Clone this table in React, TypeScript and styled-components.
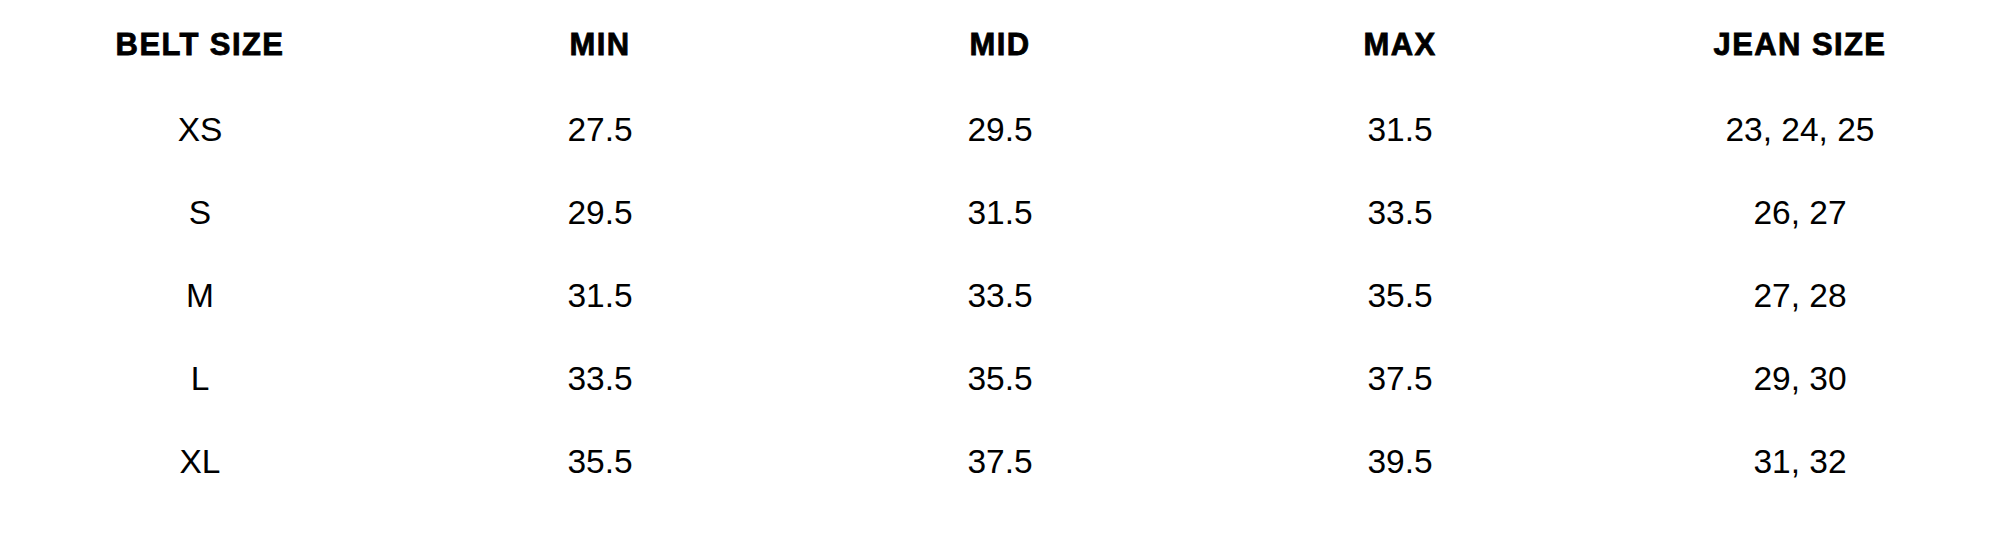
import styled, { createGlobalStyle } from "styled-components"

type SizeRow = {
    belt: string
    min: string
    mid: string
    max: string
    jean: string
}

const rows: SizeRow[] = [
    { belt: "XS", min: "27.5", mid: "29.5", max: "31.5", jean: "23, 24, 25" },
    { belt: "S", min: "29.5", mid: "31.5", max: "33.5", jean: "26, 27" },
    { belt: "M", min: "31.5", mid: "33.5", max: "35.5", jean: "27, 28" },
    { belt: "L", min: "33.5", mid: "35.5", max: "37.5", jean: "29, 30" },
    { belt: "XL", min: "35.5", mid: "37.5", max: "39.5", jean: "31, 32" },
]

const headers = ["BELT SIZE", "MIN", "MID", "MAX", "JEAN SIZE"]

export default function App(){
    return(
        <>
            <GlobalStyle/>
            <Page>
                <SizeTable>
                    <thead>
                        <HeadRow>
                            {headers.map((h)=><HeadCell key={h}>{h}</HeadCell>)}
                        </HeadRow>
                    </thead>
                    <tbody>
                        {rows.map((r)=>(
                            <BodyRow key={r.belt}>
                                <Cell>{r.belt}</Cell>
                                <Cell>{r.min}</Cell>
                                <Cell>{r.mid}</Cell>
                                <Cell>{r.max}</Cell>
                                <Cell>{r.jean}</Cell>
                            </BodyRow>
                        ))}
                    </tbody>
                </SizeTable>
            </Page>
        </>
    )
}

const GlobalStyle = createGlobalStyle`
    html, body{
        margin: 0;
        padding: 0;
        background: #ffffff;
    }
    body{
        font-family: "Liberation Sans", Arial, Helvetica, sans-serif;
        color: #000000;
    }
`;

const Page = styled.div`
    width: 2000px;
    height: 560px;
    background: #ffffff;
`;

const SizeTable = styled.table`
    width: 2000px;
    table-layout: fixed;
    border-collapse: collapse;
    border-spacing: 0;
`;

const HeadRow = styled.tr`
    height: 88px;
`;

const BodyRow = styled.tr`
    height: 83px;
`;

const HeadCell = styled.th`
    padding: 0;
    text-align: center;
    vertical-align: middle;
    font-size: 31px;
    font-weight: 700;
    letter-spacing: 1.4px;
    -webkit-text-stroke: 0.8px #000000;
    line-height: 1;
`;

const Cell = styled.td`
    padding: 0;
    text-align: center;
    vertical-align: middle;
    font-size: 33.5px;
    font-weight: 400;
    line-height: 1;
`;
